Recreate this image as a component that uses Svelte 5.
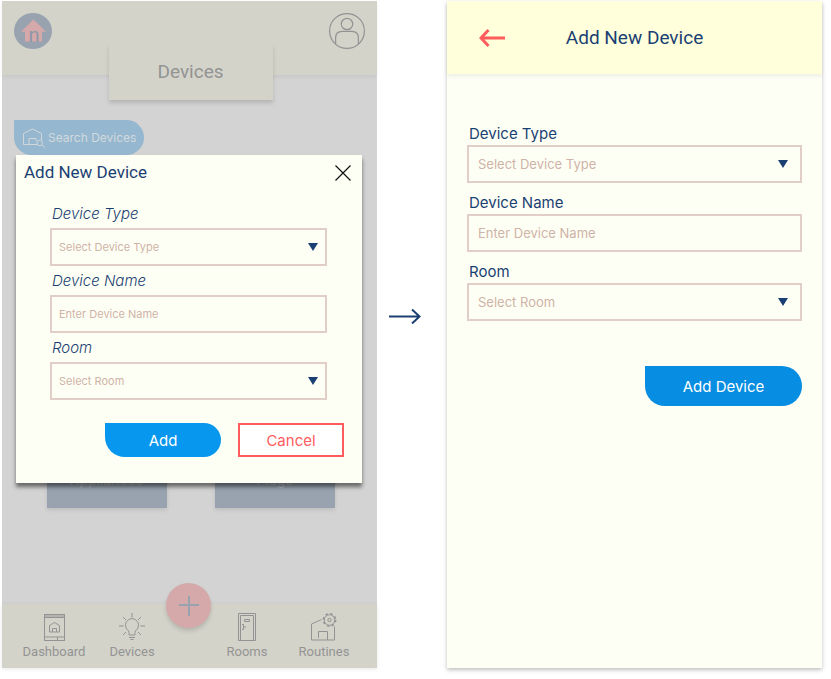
<script>
  const deviceTypes = ['Appliances', 'Plugs'];
  const rooms = ['Kitchen', 'Bedroom'];
  const fields = [
    { id: 'type', label: 'Device Type', hint: 'Select Device Type', options: deviceTypes },
    { id: 'name', label: 'Device Name', hint: 'Enter Device Name' },
    { id: 'room', label: 'Room', hint: 'Select Room', options: rooms }
  ];
</script>

{#snippet formFields(prefix)}
  {#each fields as f (f.id)}
    <div class="field">
      <label for="{prefix}-{f.id}">{f.label}</label>
      {#if f.options}
        <div class="pick">
          <select id="{prefix}-{f.id}">
            <option value="">{f.hint}</option>
            {#each f.options as o}<option>{o}</option>{/each}
          </select>
          <svg class="caret" width="10" height="8" viewBox="0 0 10 8" aria-hidden="true"><path d="M0 0h10L5 8z" fill="#1a3f73" /></svg>
        </div>
      {:else}
        <input id="{prefix}-{f.id}" type="text" placeholder={f.hint} />
      {/if}
    </div>
  {/each}
{/snippet}

<main>
  <section class="phone dimmed">
    <header class="top">
      <svg class="logo" width="38" height="36" viewBox="0 0 38 36" aria-label="Home">
        <ellipse cx="19" cy="18" rx="19" ry="18" fill="#99a3b0" />
        <path d="M19.500 6.500 32 18.700h-4V28.500H11V18.700H7z" fill="#d5a8a9" />
        <text x="20" y="28.500" text-anchor="middle" font-size="20" fill="#8b98aa">n</text>
      </svg>
      <h1>Devices</h1>
      <svg class="user" width="36" height="36" viewBox="0 0 36 36" fill="none" stroke="#939393" stroke-width="1.200" aria-label="Profile">
        <circle cx="18" cy="18" r="17.400" />
        <circle cx="18" cy="11" r="5.700" />
        <path d="M6.600 31v-6q0-6.600 6.600-6.600h9.600q6.600 0 6.600 6.600v6" />
      </svg>
    </header>

    <button class="search">
      <svg width="23" height="20" viewBox="0 0 23 20" fill="none" stroke="#d0d6d9" stroke-width="1" aria-hidden="true">
        <path d="M14 16.500H.500V5.500L9.500 1l9 4.500V12" />
        <path d="M6 16v-5.500h7V13" />
        <circle cx="16.700" cy="15" r="2.800" />
        <path d="M19 17l3 2.500" />
      </svg>
      Search Devices
    </button>

    <div class="tiles">
      <button>Appliances</button>
      <button>Plugs</button>
    </div>

    <nav>
      <a href="#dashboard">
        <svg width="21" height="28" viewBox="0 0 21 28" fill="none" stroke="#939393" aria-hidden="true">
          <rect x=".5" y="1.500" width="20" height="26" />
          <path d="M1 4.500h19M1 24h19M13.500 24v3" />
          <path d="M1 3h19" stroke-width="3" opacity=".5" />
          <path d="M5.500 19v-6.500l5-3 5 3V19zM8.500 19v-3.500h4V19" />
        </svg>
        Dashboard
      </a>
      <a href="#devices">
        <svg width="26" height="28" viewBox="0 0 26 28" fill="none" stroke="#939393" aria-hidden="true">
          <path d="M10 22v-2.500q0-1.500-2-3.200a6.500 6.500 0 1 1 10 0q-2 1.700-2 3.200V22zM10 24.500h6M11.500 26.500h3M13 0v4.500M0 13h4.500M21.500 13H26M4 4l3 3M22 4l-3 3M4 22l3-3M22 22l-3-3" />
        </svg>
        Devices
      </a>
      <button class="fab" aria-label="Add device">
        <svg width="20" height="20" viewBox="0 0 20 20" aria-hidden="true"><path d="M10 0v20M0 9h20" stroke="#99a3b0" stroke-width="2" /></svg>
      </button>
      <a href="#rooms">
        <svg width="18" height="28" viewBox="0 0 18 28" fill="none" stroke="#939393" aria-hidden="true">
          <path d="M.5 27.500V.5h17v27zM2.500 27V2.500h13V27M6.500 6.500h5v2h-5zM4 11.500h1.500v5H4M5 14h3" />
        </svg>
        Rooms
      </a>
      <a href="#routines">
        <svg width="26" height="28" viewBox="0 0 26 28" fill="none" stroke="#939393" aria-hidden="true">
          <path d="M10.500 6.500.5 11v16h23V13.500M7.500 25v-6.500h9V27" />
          <circle cx="18.500" cy="7" r="5.300" />
          <circle cx="18.500" cy="7" r="6.200" stroke-width="1.500" stroke-dasharray="2.400 2.470" />
          <circle cx="18.500" cy="7" r="1.700" />
        </svg>
        Routines
      </a>
    </nav>

    <form class="modal" onsubmit={(e) => e.preventDefault()}>
      <div class="bar">
        <h2>Add New Device</h2>
        <button type="button" class="close" aria-label="Close">
          <svg width="16" height="16" viewBox="0 0 16 16" aria-hidden="true"><path d="M.5.5l15 15M15.500.5l-15 15" stroke="#111" stroke-width="1.200" /></svg>
        </button>
      </div>
      <div class="fields">{@render formFields('modal')}</div>
      <div class="actions">
        <button class="primary">Add</button>
        <button type="button" class="cancel">Cancel</button>
      </div>
    </form>
  </section>

  <div class="flow">
    <svg width="32" height="16" viewBox="0 0 32 16" fill="none" stroke="#1a3f73" stroke-width="2" aria-hidden="true"><path d="M0 8.500h30M23 1.500l7.500 7-7.500 7" /></svg>
  </div>

  <section class="phone screen">
    <header class="page-head">
      <a href="#back" aria-label="Back">
        <svg width="27" height="18" viewBox="0 0 27 18" fill="none" stroke="#ff5d5d" stroke-width="3" aria-hidden="true"><path d="M26 9H2M9.500 1L2 9l7.500 8" /></svg>
      </a>
      <h2>Add New Device</h2>
    </header>
    <form class="page-form" onsubmit={(e) => e.preventDefault()}>
      {@render formFields('page')}
      <button class="primary">Add Device</button>
    </form>
  </section>
</main>

<style>
  :global(body) { background: #fff; }
  * { box-sizing: border-box; }
  main {
    display: grid;
    grid-template-columns: 1fr 70px 1fr;
    min-height: 100vh;
    padding: 1px 9px 11px 2px;
    font-family: Inter, "Liberation Sans", sans-serif;
    color: #1a3f73;
  }
  h1, h2 { margin: 0; font-family: Roboto, "Liberation Sans", sans-serif; font-weight: 400; }
  button, input, select { font: inherit; margin: 0; }
  button { border: 0; padding: 0; background: none; cursor: pointer; }
  a { color: inherit; text-decoration: none; }
  svg { display: block; flex: none; }

  .phone { position: relative; display: flex; flex-direction: column; min-width: 0; }
  .dimmed { background: #d3d3d3; color: #939393; }
  .top {
    display: flex;
    justify-content: space-between;
    height: 74px;
    padding: 0 12px;
    background: #d3d3ca;
    box-shadow: 0 2px 4px rgba(0, 0, 0, .06);
  }
  .logo, .user { margin-top: 12px; }
  .logo text { font-family: Roboto, sans-serif; }
  h1 {
    width: 164px;
    height: 56px;
    margin-top: 43px;
    background: #d3d3ca;
    box-shadow: 0 3px 4px rgba(0, 0, 0, .14);
    font-size: 19px;
    line-height: 56px;
    text-align: center;
  }
  .search {
    display: flex;
    align-items: center;
    gap: 2px;
    align-self: flex-start;
    height: 35px;
    margin: 45px 0 0 12px;
    padding: 0 8px 0 9px;
    border-radius: 0 18px 18px 18px;
    background: #95b7cf;
    color: #d3dadd;
    font-size: 12px;
    white-space: nowrap;
  }
  .tiles {
    display: grid;
    grid-template-columns: 120px 120px;
    justify-content: center;
    gap: 48px;
    margin: 233px 0 auto 2px;
  }
  .tiles button {
    height: 120px;
    padding-top: 63px;
    background: #99a3b0;
    box-shadow: 0 2px 4px rgba(0, 0, 0, .1);
    color: #b9bec1;
    font-size: 14px;
  }
  nav {
    display: grid;
    grid-template-columns: 76fr 80fr 35fr 80fr 74fr;
    height: 64px;
    padding: 0 16px 0 14px;
    background: #d3d3ca;
    box-shadow: 0 1px 4px rgba(0, 0, 0, .1);
    font-family: Roboto, "Liberation Sans", sans-serif;
    font-size: 13px;
    line-height: 16px;
  }
  nav a { display: flex; flex-direction: column; align-items: center; gap: 3px; padding-top: 9px; }
  .fab {
    display: grid;
    place-items: center;
    justify-self: center;
    width: 45px;
    height: 45px;
    margin: -21px -4px 0 -6px;
    border-radius: 50%;
    background: #d5a8a9;
    box-shadow: 0 3px 4px rgba(0, 0, 0, .14);
  }

  .modal {
    position: absolute;
    top: 154px;
    left: 14px;
    right: 15px;
    padding-bottom: 26px;
    background: #fefff4;
    box-shadow: 0 4px 4px rgba(0, 0, 0, .5);
    color: #1a3f73;
  }
  .bar { display: flex; justify-content: space-between; padding: 7px 11px 0 8px; }
  .bar h2 { font-size: 17px; line-height: 20px; }
  .close { padding-top: 2px; }
  .fields { display: grid; gap: 5px; padding: 22px 35px 0 34px; }
  .field { display: grid; gap: 4px; }
  label { padding-left: 2px; font-size: 15px; line-height: 20px; }
  .fields label { font-style: italic; font-weight: 300; }
  .pick { display: grid; align-items: center; }
  .pick > * { grid-area: 1 / 1; }
  .caret { justify-self: end; margin-right: 14px; pointer-events: none; }
  .fields .caret { margin-right: 9px; }
  select, input {
    width: 100%;
    height: 38px;
    padding: 0 9px;
    border: 2px solid #e1cec7;
    border-radius: 0;
    background: transparent;
    color: #cfb3a8;
    font-size: 13px;
    appearance: none;
  }
  .fields select, .fields input { padding: 0 7px; font-size: 11px; }
  input::placeholder { color: #cfb3a8; opacity: 1; }
  .actions { display: flex; justify-content: flex-end; gap: 17px; padding: 23px 18px 0 0; }
  .primary { background: #0897ee; color: #fff; font-size: 15px; }
  .actions .primary { width: 116px; height: 34px; border-radius: 0 17px 17px 20px; }
  .cancel { width: 106px; height: 34px; border: 2px solid #ff5d5d; background: #fff; color: #ff5d5d; font-size: 15px; }

  .flow { padding: 307px 0 0 12px; }

  .screen { background: #fefff4; box-shadow: 0 2px 4px rgba(0, 0, 0, .25); }
  .page-head {
    display: grid;
    grid-template-columns: 1fr auto 1fr;
    align-items: center;
    height: 73px;
    padding: 0 32px;
    background: #ffffdb;
    box-shadow: 0 2px 4px rgba(0, 0, 0, .07);
  }
  .page-head h2 { font-size: 19px; line-height: 24px; }
  .page-form { display: grid; gap: 10px; padding: 50px 20px 0; }
  .page-form .field { gap: 1px; }
  .page-form .primary {
    justify-self: end;
    width: 157px;
    height: 40px;
    margin-top: 35px;
    border-radius: 0 20px 20px 20px;
    background: #078de1;
  }
</style>
